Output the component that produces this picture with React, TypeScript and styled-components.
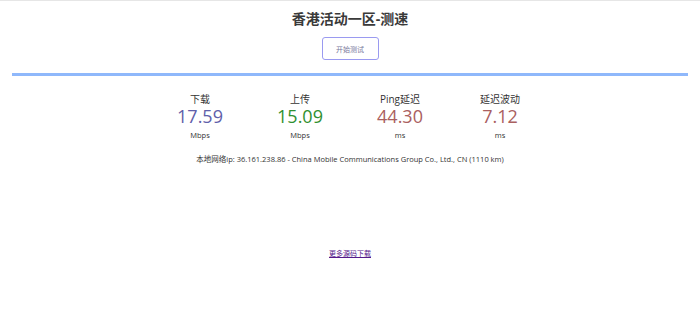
import React from "react";
import styled, { createGlobalStyle } from "styled-components";

const GlobalStyle = createGlobalStyle`
  html, body {
    margin: 0;
    padding: 0;
    background: #fff;
  }
  body {
    font-family: "Open Sans", "Noto Sans CJK SC", sans-serif;
    color: #333;
    border-top: 1px solid #e6e6e6;
  }
`;

const Page = styled.div`
  display: flex;
  flex-direction: column;
  align-items: center;
  padding-top: 8px;
`;

const Title = styled.h1`
  margin: 0;
  font-size: 14px;
  line-height: 20px;
  font-weight: 700;
  color: #3a3a3a;
`;

const StartButton = styled.button`
  margin-top: 8px;
  width: 57px;
  height: 23px;
  border: 1px solid #9a9af0;
  border-radius: 3px;
  background: #fff;
  color: #77779a;
  font-family: "Open Sans", "Noto Sans CJK SC", sans-serif;
  font-size: 7px;
  padding: 0;
  cursor: pointer;
`;

const ProgressBar = styled.div`
  align-self: stretch;
  margin: 13px 12px 0;
  height: 3px;
  background: #8fb8fb;
`;

const StatsRow = styled.div`
  display: flex;
  margin-top: 17px;
`;

const Stat = styled.div`
  width: 100px;
  display: flex;
  flex-direction: column;
  align-items: center;
`;

const StatLabel = styled.div`
  font-size: 10px;
  line-height: 12px;
  color: #333;
`;

const StatValue = styled.div<{ color: string }>`
  margin-top: 2px;
  font-size: 18px;
  line-height: 18px;
  color: ${({ color }) => color};
`;

const StatUnit = styled.div`
  margin-top: 5px;
  font-size: 7.5px;
  line-height: 10px;
  color: #333;
`;

const IpInfo = styled.div`
  margin-top: 14px;
  font-size: 7.5px;
  line-height: 10px;
  color: #333;
`;

const SourceLink = styled.a`
  margin-top: 84px;
  font-size: 7px;
  color: #551a8b;
  text-decoration: underline;
`;

const stats = [
  { label: "下载", value: "17.59", unit: "Mbps", color: "#6060aa" },
  { label: "上传", value: "15.09", unit: "Mbps", color: "#309030" },
  { label: "Ping延迟", value: "44.30", unit: "ms", color: "#aa6060" },
  { label: "延迟波动", value: "7.12", unit: "ms", color: "#aa6060" },
];

export default function App() {
  return (
    <>
      <GlobalStyle />
      <Page>
        <Title>香港活动一区-测速</Title>
        <StartButton>开始测试</StartButton>
        <ProgressBar />
        <StatsRow>
          {stats.map((s) => (
            <Stat key={s.label}>
              <StatLabel>{s.label}</StatLabel>
              <StatValue color={s.color}>{s.value}</StatValue>
              <StatUnit>{s.unit}</StatUnit>
            </Stat>
          ))}
        </StatsRow>
        <IpInfo>
          本地网络ip: 36.161.238.86 - China Mobile Communications Group Co.,
          Ltd., CN (1110 km)
        </IpInfo>
        <SourceLink href="#">更多源码下载</SourceLink>
      </Page>
    </>
  );
}
